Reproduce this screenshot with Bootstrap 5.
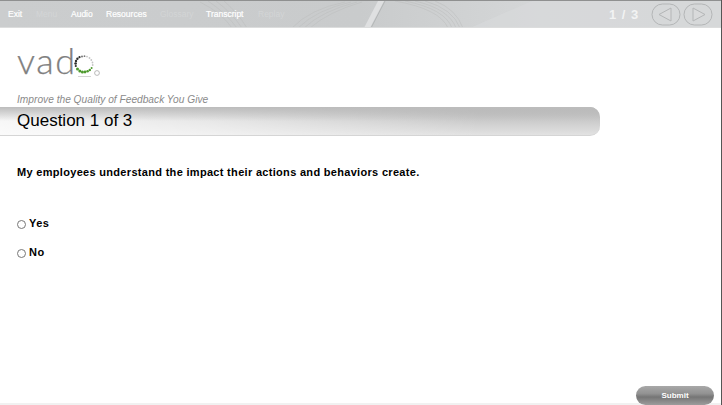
<!DOCTYPE html>
<html lang="en"><head><meta charset="utf-8"><title>Vado</title>
<link href="https://cdn.jsdelivr.net/npm/bootstrap@5.3.0/dist/css/bootstrap.min.css" rel="stylesheet">
<style>
html,body{height:405px;overflow:hidden;background:#fff}
body{font-family:"Liberation Sans",Arial,sans-serif;color:#000;width:722px;position:relative}
.shell{height:405px;border-right:1px solid #555;display:flex;flex-direction:column}
.topbar{height:28px;flex:none;border-top:1px solid #8f9090;border-bottom:1px solid #dcdddd;background:linear-gradient(90deg,#cbcdce 0,#c9cbcc 50%,#d5d7d8 75%,#d2d4d5 100%);position:relative;overflow:hidden}
.topbar svg.waves{position:absolute;left:0;top:0}
.menu-a{position:absolute;top:8px;font-size:8.5px;line-height:11px;color:#fff;-webkit-text-stroke:.2px #fff}
.menu-off{color:#d3d5d6;-webkit-text-stroke:0}
.pager{position:absolute;left:609px;top:6px;font-size:13px;line-height:16px;font-weight:700;color:#f2f3f3;letter-spacing:1px}
.navbtn{position:absolute;top:2px}
.brand-zone{height:79px;flex:none;padding:13px 0 0 17px;position:relative}
.logo-word{font-family:"Lato",sans-serif;font-weight:300;font-size:36px;line-height:38px;color:#808080;letter-spacing:1.6px;-webkit-text-stroke:.25px #808080}
.logo-mark{position:absolute;left:73px;top:25px}
.tagline{position:absolute;left:17px;top:65px;font-size:10.2px;line-height:13px;font-style:italic;color:#8a8a8a}
.qbar{width:600px;height:29px;flex:none;border-radius:0 10px 10px 0;background:linear-gradient(#bcbcbc,rgba(188,188,188,0) 50%),linear-gradient(to right,rgba(255,255,255,.85) 0,rgba(255,255,255,.55) 35%,rgba(255,255,255,0) 80%),linear-gradient(#b5b5b5,#e2e2e2);border-bottom:1px solid #d5d5d5;padding-left:17px;font-size:17px;line-height:28px;color:#000}
.prompt{margin:29px 0 0 17px;font-size:11px;line-height:14px;font-weight:700;letter-spacing:.31px}
.choices{margin:37px 0 0 17px;display:flex;flex-direction:column;gap:14.5px}
.choice{display:flex;align-items:center;gap:3px;font-size:11px;line-height:14px;font-weight:700;letter-spacing:.5px}
.choice .ring{width:9px;height:9px;border:1px solid #777;border-radius:50%;background:#fff;margin-top:2px;flex:none}
.choice + .choice .ring{margin-top:4px}
.foot{margin-top:auto;height:19px;position:relative;border-bottom:2px solid #f1f1f1}
.submit-b{position:absolute;left:636px;top:0;width:78px;height:19px;padding:1px 0 0;border:0;border-radius:9.5px;font-size:8px;line-height:18px;font-weight:700;color:#fff;background:linear-gradient(#a8a8a8 0,#929292 40%,#757575 58%,#9c9c9c 100%)}
</style></head>
<body>
<div class="shell">
  <div class="topbar">
    <svg class="waves" width="722" height="27" viewBox="0 0 722 27" fill="none">
      <path d="M470 27L532 0H722V27Z" fill="#d9dbdc" opacity=".55"/>
      <path d="M364 27L378 0H384L370 27Z" fill="#dfe0e1"/>
      <path d="M371 27L385 0" stroke="#b4b6b7" stroke-width="1"/>
      <g stroke="#bdbfc0" stroke-width=".6">
        <path d="M395 0Q440 8 448 27"/><path d="M405 0Q445 8 452 27"/><path d="M415 0Q449 8 456 27"/><path d="M425 0Q453 8 460 27"/><path d="M435 0Q456 8 463 27"/>
        <path d="M200 1Q222 12 232 27"/><path d="M208 0Q226 12 237 27"/><path d="M216 0Q232 12 242 27"/><path d="M224 0Q238 12 247 27"/>
        <path d="M292 27Q310 8 345 1"/><path d="M298 27Q316 9 351 1"/><path d="M304 27Q322 10 357 1"/><path d="M310 27Q328 11 362 1"/>
      </g>
    </svg>
    <span class="menu-a" style="left:8px">Exit</span>
    <span class="menu-a menu-off" style="left:36px">Menu</span>
    <span class="menu-a" style="left:71px">Audio</span>
    <span class="menu-a" style="left:106px">Resources</span>
    <span class="menu-a menu-off" style="left:160px">Glossary</span>
    <span class="menu-a" style="left:206px">Transcript</span>
    <span class="menu-a menu-off" style="left:258px">Replay</span>
    <span class="pager">1 / 3</span>
    <svg class="navbtn" style="left:651px" width="31" height="23" viewBox="0 0 31 23" fill="none"><rect x="1" y="1" width="28" height="21" rx="10.5" stroke="#b4b6b7"/><path d="M20 5V18L8 11.5Z" stroke="#b4b6b7" fill="#d9dadb"/></svg>
    <svg class="navbtn" style="left:683px" width="31" height="23" viewBox="0 0 31 23" fill="none"><rect x="1" y="1" width="28" height="21" rx="10.5" stroke="#b4b6b7"/><path d="M10 5V18L22 11.5Z" stroke="#b4b6b7" fill="#d9dadb"/></svg>
  </div>
  <div class="brand-zone">
    <div class="logo-word">vad</div>
    <svg class="logo-mark" width="30" height="30" viewBox="0 0 30 30">
      <g fill="#2c2c2c"><circle cx="2.6" cy="10.5" r="1.3"/><circle cx="3" cy="8" r="1.2"/><circle cx="4.4" cy="5.8" r="1.2"/><circle cx="6.5" cy="4.2" r="1.1"/><circle cx="2.8" cy="13" r="1.1"/></g>
      <g fill="#777"><circle cx="9" cy="3.4" r="1"/><circle cx="11.5" cy="3.2" r=".9"/></g>
      <g fill="#c4c4c4"><circle cx="14" cy="3.6" r=".9"/><circle cx="16.5" cy="5" r=".9"/><circle cx="18.3" cy="7" r=".9"/><circle cx="19.5" cy="9.5" r=".9"/><circle cx="19.7" cy="12" r=".9"/></g>
      <g fill="#4e9a2e"><circle cx="4.5" cy="16" r="1.5"/><circle cx="6.8" cy="18" r="1.5"/><circle cx="9.4" cy="19" r="1.5"/><circle cx="12" cy="19" r="1.4"/><circle cx="14.6" cy="18.3" r="1.3"/><circle cx="16.8" cy="17" r="1.2"/><circle cx="18.6" cy="15" r="1"/></g>
      <circle cx="24" cy="20" r="2.4" fill="none" stroke="#aaa" stroke-width=".8"/>
      <rect x="5" y="23" width="13" height="1" fill="#d4d4d4"/>
    </svg>
    <div class="tagline">Improve the Quality of Feedback You Give</div>
  </div>
  <div class="qbar">Question 1 of 3</div>
  <p class="prompt">My employees understand the impact their actions and behaviors create.</p>
  <div class="choices">
    <div class="choice"><span class="ring"></span>Yes</div>
    <div class="choice"><span class="ring"></span>No</div>
  </div>
  <div class="foot"><button class="submit-b" type="button">Submit</button></div>
</div>
</body></html>
